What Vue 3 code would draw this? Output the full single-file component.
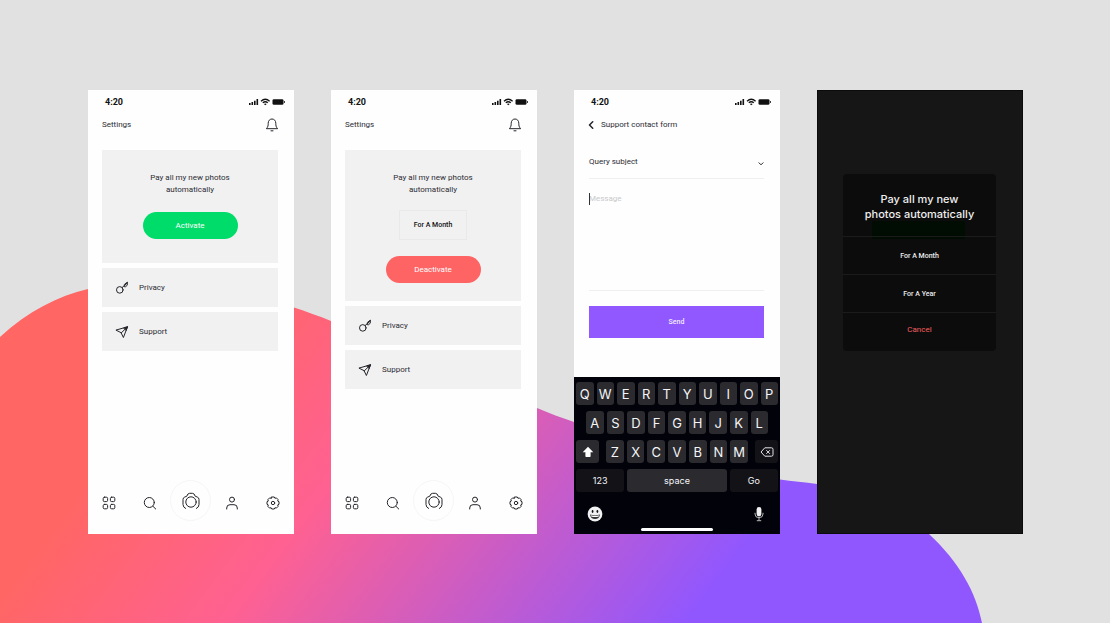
<script setup>
const plans = [
  { id: 'idle', period: '', action: 'Activate', tone: 'green' },
  { id: 'active', period: 'For A Month', action: 'Deactivate', tone: 'coral' },
]
const topKeys = 'QWERTYUIOP'.split('')
const homeKeys = 'ASDFGHJKL'.split('')
const lowKeys = 'ZXCVBNM'.split('')
</script>

<template>
  <main class="stage">
    <svg class="blob" viewBox="0 0 1110 623" preserveAspectRatio="none" aria-hidden="true">
      <defs>
        <linearGradient id="flow" gradientUnits="userSpaceOnUse" x1="288" y1="216" x2="740" y2="555">
          <stop offset="0" stop-color="#ff6664" />
          <stop offset="0.34" stop-color="#ff6191" />
          <stop offset="1" stop-color="#9057ff" />
        </linearGradient>
      </defs>
      <path fill="url(#flow)" d="M0 337C28 311 58 296 88 289C160 272 240 287 294 307.500C306 311.500 319 316 331 321C400 349 470 380 537 408C549 413 562 418 574 422C640 447 715 468 780 479.500C792 481.500 805 482 817 484C866 492 903 510 929 534C959 562 976 592 982 623H0Z" />
    </svg>

    <section v-for="p in plans" :key="p.id" class="phone">
      <div class="status">
        <span>4:20</span>
        <svg width="36" height="8" viewBox="0 0 36 8" aria-hidden="true">
          <path d="M0 5h1.600v2H0zM2.500 4h1.600v3H2.500zM5 2.700h1.600V7H5zM7.500 1h1.600v6H7.500z" />
          <path d="M12 3.200Q16.300-.6 20.600 3.200M13.800 4.800Q16.300 2.700 18.800 4.800" fill="none" stroke="#111" stroke-width="1.300" />
          <path d="M14.900 5.900Q16.300 4.900 17.700 5.900L16.300 7.300z" />
          <rect x="23.500" y="1.200" width="11" height="5.600" rx="1.400" /><path d="M35 3h.8v2H35z" />
        </svg>
      </div>
      <header class="bar">
        <h2>Settings</h2>
        <button class="bare" aria-label="Notifications">
          <svg class="line" width="12" height="14" viewBox="0 0 12 14"><path d="M.6 10.400C2 9 2.200 7.500 2.200 5.300C2.200 2.700 3.800 1 6 1s3.800 1.700 3.800 4.300c0 2.200.2 3.700 1.600 5.100zM5 12.800h2" /></svg>
        </button>
      </header>
      <div class="stack">
        <div class="card" :class="{ chosen: p.period }">
          <p>Pay all my new photos<br>automatically</p>
          <button v-if="p.period" class="period">{{ p.period }}</button>
          <button class="pill" :class="p.tone">{{ p.action }}</button>
        </div>
        <button class="row">
          <svg class="line" width="14" height="14" viewBox="0 0 14 14"><circle cx="4.800" cy="8.900" r="3.300" /><path d="M7.200 6.500L9.200 4.700M9.200 5.300L9.400 3.400L12.400 1.200L12.200 4.300L10.800 5.500zM9.600 4.700L12.200 1.500" /></svg>
          Privacy
        </button>
        <button class="row">
          <svg class="line" width="14" height="14" viewBox="0 0 14 14"><path d="M1.300 5L12.500 1.800L8.400 12.500L6.200 8zM6.200 8L12.500 1.800" /><path d="M9 2.800L12.500 1.800L11.300 5.200z" fill="#24242a" /></svg>
          Support
        </button>
      </div>
      <nav class="tabs">
        <button class="bare" aria-label="Gallery">
          <svg class="line" width="14" height="14" viewBox="0 0 14 14"><rect x="1.200" y="1.200" width="4.400" height="4.400" rx="1.200" /><rect x="8.400" y="1.200" width="4.400" height="4.400" rx="1.200" /><rect x="1.200" y="8.400" width="4.400" height="4.400" rx="1.200" /><rect x="8.400" y="8.400" width="4.400" height="4.400" rx="1.200" /></svg>
        </button>
        <button class="bare" aria-label="Search">
          <svg class="line" width="14" height="14" viewBox="0 0 14 14"><circle cx="6.300" cy="6.500" r="5" /><path d="M10 10.300L12.700 13" /></svg>
        </button>
        <button class="bare shutter" aria-label="Camera">
          <svg class="line" width="20" height="20" viewBox="0 0 20 20"><circle cx="10" cy="11" r="5.200" /><path d="M4.600 17.500Q2 16.300 2 13.500V8.500Q2 6.600 3.800 6L5.800 5.200Q6.600 2.300 8.600 2.300H11.400Q13.400 2.300 14.200 5.200L16.200 6Q18 6.600 18 8.500V13.500Q18 16.300 15.400 17.500" /></svg>
        </button>
        <button class="bare" aria-label="Profile">
          <svg class="line" width="14" height="14" viewBox="0 0 14 14"><circle cx="7" cy="3.600" r="2.500" /><path d="M1.700 13V12Q1.700 8.700 5 8.700H9Q12.300 8.700 12.300 12V13" /></svg>
        </button>
        <button class="bare" aria-label="Preferences">
          <svg class="line" width="14" height="14" viewBox="0 0 14 14"><circle cx="7" cy="7" r="1.700" /><path d="M5.700 1H8.300L8.950 2.300L10.400 1.900L12.100 3.600L11.700 5.050L13 5.700V8.300L11.700 8.950L12.100 10.400L10.400 12.100L8.950 11.700L8.300 13H5.700L5.050 11.700L3.600 12.100L1.900 10.400L2.300 8.950L1 8.300V5.700L2.300 5.050L1.900 3.600L3.600 1.900L5.050 2.300z" /></svg>
        </button>
      </nav>
    </section>

    <section class="phone">
      <div class="status">
        <span>4:20</span>
        <svg width="36" height="8" viewBox="0 0 36 8" aria-hidden="true">
          <path d="M0 5h1.600v2H0zM2.500 4h1.600v3H2.500zM5 2.700h1.600V7H5zM7.500 1h1.600v6H7.500z" />
          <path d="M12 3.200Q16.300-.6 20.600 3.200M13.800 4.800Q16.300 2.700 18.800 4.800" fill="none" stroke="#111" stroke-width="1.300" />
          <path d="M14.900 5.900Q16.300 4.900 17.700 5.900L16.300 7.300z" />
          <rect x="23.500" y="1.200" width="11" height="5.600" rx="1.400" /><path d="M35 3h.8v2H35z" />
        </svg>
      </div>
      <header class="bar back">
        <button class="bare" aria-label="Back"><svg class="line bold" width="6" height="8" viewBox="0 0 6 8"><path d="M4.700.8L1.500 4L4.700 7.200" /></svg></button>
        <h2>Support contact form</h2>
      </header>
      <form class="form" @submit.prevent>
        <div class="pick">
          <select aria-label="Query subject"><option>Query subject</option></select>
          <svg class="line chev" width="6" height="4" viewBox="0 0 6 4" aria-hidden="true"><path d="M1 .8L3 2.800L5 .8" /></svg>
        </div>
        <div class="message">
          <textarea aria-label="Message" placeholder="Message"></textarea>
          <span class="caret"></span>
        </div>
        <button class="send">Send</button>
      </form>
      <div class="keyboard">
        <div class="keys"><button v-for="k in topKeys" :key="k">{{ k }}</button></div>
        <div class="keys home"><button v-for="k in homeKeys" :key="k">{{ k }}</button></div>
        <div class="keys low">
          <button class="side" aria-label="Shift"><svg width="12" height="12" viewBox="0 0 12 12"><path d="M6 .8L11.300 6.300H8.600V10.300Q8.600 11 7.900 11H4.100Q3.400 11 3.400 10.300V6.300H.7z" fill="#fff" /></svg></button>
          <div class="keys mid"><button v-for="k in lowKeys" :key="k">{{ k }}</button></div>
          <button class="side dark" aria-label="Delete"><svg width="14" height="10" viewBox="0 0 14 10" fill="none" stroke="#e4e4e8"><path d="M4.800.8H11.500Q13 .8 13 2.300V7.700Q13 9.200 11.500 9.200H4.800L1 5zM6.300 3.200L9.900 6.800M9.900 3.200L6.300 6.800" /></svg></button>
        </div>
        <div class="keys words">
          <button class="dark">123</button>
          <button class="space">space</button>
          <button class="dark">Go</button>
        </div>
        <div class="tray">
          <button class="bare" aria-label="Emoji"><svg width="16" height="16" viewBox="0 0 16 16"><circle cx="8" cy="8" r="7.400" fill="#f1f1f3" /><ellipse cx="5.600" cy="5.500" rx=".9" ry="1.400" fill="#111" /><ellipse cx="10.400" cy="5.500" rx=".9" ry="1.400" fill="#111" /><path d="M3 8.500Q8 9.800 13 8.500Q12.300 13 8 13T3 8.500z" fill="#333" /><path d="M3.900 9.300Q8 10.300 12.100 9.300L11.500 10.700Q8 11.500 4.500 10.700z" fill="#fff" /></svg></button>
          <button class="bare" aria-label="Dictate"><svg width="10" height="16" viewBox="0 0 10 16" fill="none" stroke="#b8b8bc"><rect x="2.600" y="1" width="4.800" height="9.400" rx="2.400" fill="#f1f1f3" stroke="none" /><path d="M1 6.800V8Q1 11.700 5 11.700T9 8V6.800M5 11.700V14.300M2.800 14.700H7.200" /></svg></button>
        </div>
        <div class="grip"></div>
      </div>
    </section>

    <section class="phone night">
      <div class="dialog" role="dialog" aria-labelledby="ask">
        <span class="ghost"></span>
        <h2 id="ask">Pay all my new<br>photos automatically</h2>
        <button>For A Month</button>
        <button>For A Year</button>
        <button class="cancel">Cancel</button>
      </div>
    </section>
  </main>
</template>

<style>
body { margin: 0; background: #e1e1e1; }
</style>

<style scoped>
* { box-sizing: border-box; }
.stage {
  position: relative;
  display: grid;
  grid-template-columns: repeat(4, 1fr);
  gap: 37px;
  align-items: stretch;
  min-height: 100vh;
  padding: 90px 87px 89px 88px;
  overflow: hidden;
  background: #e1e1e1;
  color: #2c2c34;
  font: 400 8px/12px Roboto, "Liberation Sans", sans-serif;
}
.blob { position: absolute; inset: 0; width: 100%; height: 100%; }
.phone { position: relative; display: flex; flex-direction: column; min-width: 0; background: #fefefe; }
button { margin: 0; padding: 0; border: 0; background: none; color: inherit; font: inherit; }
h2, p { margin: 0; font: inherit; }
.bare { display: flex; align-items: center; justify-content: center; }
.line { fill: none; stroke: #24242a; stroke-width: 1; stroke-linecap: round; stroke-linejoin: round; }
.bold { stroke-width: 1.5; }
.status { display: flex; align-items: center; justify-content: space-between; height: 23px; padding: 0 9px 0 17px; color: #111; font-size: 9px; font-weight: 700; }
.status svg { fill: #111; }
.bar { display: flex; align-items: center; justify-content: space-between; height: 24px; padding: 0 16px 0 14px; }
.back { justify-content: flex-start; gap: 7px; }
.stack { display: flex; flex-direction: column; gap: 5px; padding: 13px 16px 0 14px; }
.card { display: flex; flex-direction: column; align-items: center; padding: 22px 0 24px; background: #f1f1f1; text-align: center; }
.chosen { padding-bottom: 18px; }
.card p { margin-bottom: 16px; }
.chosen p { margin-bottom: 14px; }
.card .period { height: 30px; margin-bottom: 16px; padding: 0 14px; border: 1px solid #e9e9e9; color: #111; font-size: 7px; font-weight: 500; }
.card .pill { width: 95px; height: 27px; border-radius: 14px; color: #fff; }
.green { background: #00dc69; }
.coral { background: #ff6464; }
.row { display: flex; align-items: center; gap: 10px; height: 39px; padding: 0 13px; background: #f1f1f1; text-align: left; }
.tabs { display: grid; grid-template-columns: repeat(5, 1fr); place-items: center; margin-top: auto; padding-bottom: 8px; }
.shutter { width: 41px; height: 41px; margin-bottom: 5px; border: 1px solid #f6f6f6; border-radius: 50%; }
.form { display: flex; flex-direction: column; padding: 9px 16px 0 15px; }
.pick { position: relative; border-bottom: 1px solid #efefef; }
.pick select { display: block; width: 100%; height: 32px; padding: 0; border: 0; appearance: none; background: none; color: inherit; font: inherit; }
.chev { position: absolute; right: 0; top: 16px; }
.message { position: relative; height: 112px; border-bottom: 1px solid #efefef; }
.message textarea { display: block; width: 100%; height: 100%; padding: 14px 0; border: 0; outline: 0; resize: none; background: none; color: inherit; font: inherit; }
.message textarea::placeholder { color: #c9c9cb; opacity: 1; }
.caret { position: absolute; left: 0; top: 14px; width: 1px; height: 12px; background: #333; }
.send { height: 32px; margin-top: 15px; background: #9158ff; color: #f3ecff; font-size: 7px; font-weight: 500; }
.keyboard { display: flex; flex-direction: column; gap: 6px; margin-top: auto; padding: 5px 2px 3px; background: #02020a; color: #f5f5f7; font-family: Inter, "Liberation Sans", sans-serif; }
.keys { display: flex; gap: 3px; }
.keys button { flex: 1; display: flex; align-items: center; justify-content: center; height: 23px; border-radius: 3px; background: #2a2a2f; font-size: 13px; font-weight: 400; }
.home { padding: 0 10px; }
.low { gap: 7px; }
.low .side { flex: 0 0 23px; }
.mid { flex: 1; }
.keys .dark { background: #131317; }
.words button { font-size: 9px; }
.words .space { flex: 2 1 3px; }
.tray { display: flex; justify-content: space-between; padding: 8px 14px 0 11px; }
.grip { align-self: center; width: 36%; height: 3px; border-radius: 2px; background: #fff; }
.night { background: #161616; border: 1px solid #0b0b0b; }
.dialog { position: relative; display: flex; flex-direction: column; margin: 83px 26px 0 25px; border-radius: 4px; background: #0c0c0c; color: #efefef; }
.dialog h2 { position: relative; padding: 18px 0 14px; font: 500 11px/15px Inter, "Liberation Sans", sans-serif; text-align: center; }
.ghost { position: absolute; left: 19%; right: 20%; top: 47px; height: 18px; background: #010d03; }
.dialog button { position: relative; height: 38px; border-top: 1px solid #1b1b1b; font-size: 7px; font-weight: 500; }
.dialog .cancel { height: 39px; padding-bottom: 4px; color: #f25f5f; font-size: 8px; font-weight: 400; }
</style>
